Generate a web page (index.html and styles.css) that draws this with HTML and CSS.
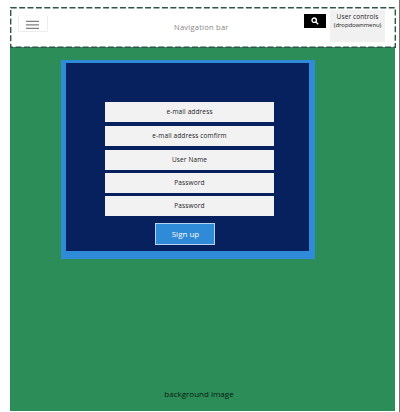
FILE: index.html
```
<!DOCTYPE html>
<html lang="en">
<head>
<meta charset="utf-8">
<title>Sign up</title>
<link rel="stylesheet" href="styles.css">
</head>
<body>
<div class="page">
  <header class="navbar">
    <svg class="outline" viewBox="0 0 386 41" aria-hidden="true"><rect x=".7" y=".7" width="384.6" height="39.6"/></svg>
    <button class="menu" aria-label="Menu"><svg viewBox="0 0 13 10"><path d="M0 1.4h13M0 4.9h13M0 8.4h13"/></svg></button>
    <span class="nav-title">Navigation bar</span>
    <button class="search" aria-label="Search">
      <svg viewBox="0 0 8 8"><circle cx="3.2" cy="3.2" r="2.2"/><path d="M4.8 4.8 7.2 7.2"/></svg>
    </button>
    <div class="user"><span class="user-name">User controls</span><span class="user-note">(dropdownmenu)</span></div>
  </header>
  <main class="background">
    <form class="card">
      <div class="field mail">e-mail address</div>
      <div class="field confirm">e-mail address comfirm</div>
      <div class="field name">User Name</div>
      <div class="field pass">Password</div>
      <div class="field pass">Password</div>
      <button class="signup" type="button">Sign up</button>
    </form>
    <p class="caption">background image</p>
  </main>
</div>
</body>
</html>
```
FILE: styles.css
```
* { box-sizing: border-box; }
body {
  margin: 0;
  width: 400px;
  height: 412px;
  overflow: hidden;
  background: #fff;
  border-right: 1px solid #7b716b;
  font-family: "Open Sans", "Noto Sans", sans-serif;
}
button { padding: 0; border: 0; font: inherit; }
.page { padding: 7px 0 0 10px; }
.navbar {
  position: relative;
  display: flex;
  align-items: flex-start;
  width: 386px;
  height: 40px;
  padding-top: 3px;
  background: #fff;
}
.outline {
  position: absolute;
  top: 0;
  left: 0;
  z-index: 1;
  width: 386px;
  height: 41px;
  pointer-events: none;
}
.outline rect { fill: none; stroke: #2e5548; stroke-width: 1.4; stroke-dasharray: 6 2.4; }
.menu {
  display: flex;
  justify-content: center;
  width: 30px;
  height: 17px;
  margin: 5px 0 0 8px;
  padding: 4px 2px 0 0;
  background: #fff;
  border: 1px solid #ededed;
  border-top-color: #fafafa;
  border-radius: 2px;
}
.menu svg { width: 13px; height: 10px; fill: none; stroke: #808080; stroke-width: 1.3; }
.nav-title {
  width: 62px;
  margin: 11px 0 0 126px;
  font-size: 7.5px;
  line-height: 12px;
  letter-spacing: .25px;
  color: #858585;
  white-space: nowrap;
}
.search {
  display: flex;
  align-items: center;
  justify-content: center;
  width: 22px;
  height: 14px;
  margin: 4px 0 0 68px;
  background: #000;
}
.search svg { width: 8px; height: 8px; fill: none; stroke: #fff; stroke-width: 1.4; }
.user {
  display: flex;
  flex-direction: column;
  align-items: center;
  width: 55px;
  height: 32px;
  margin-left: 4px;
  padding-top: 3px;
  background: #f1f1f1;
  color: #222;
  white-space: nowrap;
}
.user-name { font-size: 6.5px; line-height: 8px; letter-spacing: .1px; }
.user-note { font-size: 6px; line-height: 9px; letter-spacing: -.1px; }
.background {
  display: flex;
  flex-direction: column;
  width: 385px;
  height: 364px;
  padding-top: 13px;
  background: #2d8d59;
}
.card {
  display: flex;
  flex-direction: column;
  align-items: center;
  width: 254px;
  height: 199px;
  margin-left: 51px;
  padding: 39px 0 0 4px;
  background: #06215e;
  border: solid #2f8ad7;
  border-width: 3px 6px 8px 5px;
}
.field {
  width: 169px;
  height: 20px;
  margin: 0 0 4px;
  background: #f2f2f2;
  color: #222;
  font-size: 6.5px;
  line-height: 20px;
  letter-spacing: .13px;
  text-align: center;
  white-space: nowrap;
}
.name, .pass { margin-bottom: 3px; }
.signup {
  width: 60px;
  height: 22px;
  margin: 4px 10px 0 0;
  padding-left: 2px;
  background: #2f8ad7;
  border: 1px solid #b8d2ee;
  color: #fff;
  font-size: 8px;
  line-height: 20px;
}
.caption {
  margin: auto 0 10px;
  padding-right: 7px;
  font-size: 8px;
  line-height: 14px;
  text-align: center;
  color: #06180e;
}
```
